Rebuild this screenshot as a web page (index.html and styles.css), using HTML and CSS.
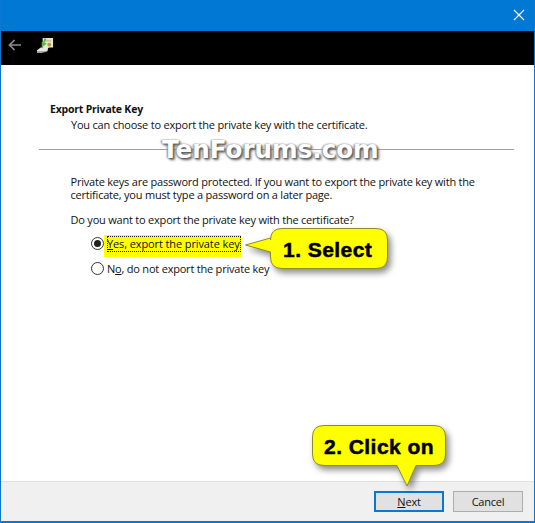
FILE: index.html
```html
<!DOCTYPE html>
<html lang="en">
<head>
  <meta charset="UTF-8">
  <meta name="viewport" content="width=device-width, initial-scale=1.0">
  <title>Export Private Key</title>
  <link rel="stylesheet" href="styles.css">
</head>
<body>
  <div class="window">
    <div class="title_bar">
      <svg class="close_icon" width="12" height="12" viewBox="0 0 12 12">
        <path d="M1 1 L11 11 M11 1 L1 11" stroke="#fff" stroke-width="1.1" fill="none"/>
      </svg>
    </div>

    <div class="nav_bar">
      <svg class="back_icon" width="14" height="12" viewBox="0 0 14 12">
        <path d="M13 6 H2 M6.5 1 L1.5 6 L6.5 11" stroke="#8c8c8c" stroke-width="1.7" fill="none"/>
      </svg>
      <svg class="wizard_icon" width="17" height="17" viewBox="0 0 18 18">
        <path d="M6 1 H17 V11 H13 L11 12 H6 Z" fill="#ece6c8"/>
        <path d="M8 3 H15 V5 H8 Z" fill="#c9c4a8"/>
        <circle cx="13" cy="8" r="2" fill="#b59a3c"/>
        <path d="M8 1 L10 2 L8 6 L10.5 7 L5 11 L5 5 L6.5 5.5 Z" fill="#58b947"/>
        <path d="M0 14 L4 11 H12 L11 15 L3 17 H0 Z" fill="#e4e4e4"/>
        <path d="M0 15 H10 V16 L3 17 H0 Z" fill="#9a9a9a"/>
      </svg>
    </div>

    <div class="content">
      <div class="head_text">
        <p class="head_title">Export Private Key</p>
        <p class="head_desc">You can choose to export the private key with the certificate.</p>
      </div>
      <div class="divider"></div>
      <div class="body_text">
        <p>Private keys are password protected. If you want to export the private key with the<br>certificate, you must type a password on a later page.</p>
        <p class="question">Do you want to export the private key with the certificate?</p>
        <div class="radio_row radio_first">
          <span class="radio checked"></span>
          <span class="label_mark"><span class="label_focus"><u>Y</u>es, export the private key</span></span>
        </div>
        <div class="radio_row">
          <span class="radio"></span>
          <span class="label_plain">N<u>o</u>, do not export the private key</span>
        </div>
      </div>
    </div>

    <div class="footer">
      <button class="btn btn_default"><u>N</u>ext</button>
      <button class="btn">Cancel</button>
    </div>
  </div>

  <!-- 水印 -->
  <div class="watermark">TenForums.com</div>

  <div class="callout callout_select">
    <svg width="150" height="50" viewBox="0 0 150 50">
      <path d="M25.5 10 V12 Q25.5 0.5 37 0.5 H131 Q142.5 0.5 142.5 12 V29 Q142.5 40.5 131 40.5 H37 Q25.5 40.5 25.5 29 V24 L0.5 17 Z" fill="#ffff00" stroke="#8c8c28"/>
    </svg>
    <span class="callout_text">1. Select</span>
  </div>

  <div class="callout callout_next">
    <svg width="140" height="66" viewBox="0 0 140 66">
      <path d="M12 0.5 H122 Q133.5 0.5 133.5 12 V29 Q133.5 40.5 122 40.5 H104 L95 61 L85 40.5 H12 Q0.5 40.5 0.5 29 V12 Q0.5 0.5 12 0.5 Z" fill="#ffff00" stroke="#8c8c28"/>
    </svg>
    <span class="callout_text">2. Click on</span>
  </div>
</body>
</html>
```

FILE: styles.css
```css
* {
  margin: 0;
  padding: 0;
  box-sizing: border-box;
}
body {
  width: 535px;
  height: 523px;
  position: relative;
  overflow: hidden;
  font-family: "Open Sans", "Noto Sans", sans-serif;
  font-size: 11px;
  letter-spacing: -.21px;
  color: #111;
}
.window {
  width: 535px;
  height: 523px;
  display: flex;
  flex-direction: column;
  border: 1px solid #0a78d2;
  border-top: 0;
  border-bottom-width: 2px;
  background-color: #fff;
}
.title_bar {
  height: 31px;
  flex: none;
  display: flex;
  justify-content: flex-end;
  align-items: center;
  padding: 0 9px 1px 0;
  background-color: #0078d4;
}
.nav_bar {
  height: 34px;
  flex: none;
  display: flex;
  align-items: center;
  gap: 15px;
  padding: 0 0 6px 7px;
  background-color: #000;
}
.content {
  flex: 1;
  padding-top: 36px;
}
.head_text {
  padding-left: 49px;
  line-height: 16px;
}
.head_title {
  font-weight: 700;
  font-size: 10.5px;
}
.head_desc {
  padding-left: 21px;
}
.divider {
  height: 1px;
  margin: 16px 20px 0 38px;
  background-color: #a0a0a0;
}
.body_text {
  padding: 25px 0 0 69.5px;
  line-height: 13px;
}
.question {
  margin-top: 12px;
}
.radio_row {
  display: flex;
  align-items: center;
  margin: 9px 0 0 20.5px;
  height: 16px;
}
.radio_first {
  margin-top: 9px;
}
.radio {
  width: 13px;
  height: 13px;
  flex: none;
  border: 1px solid #333;
  border-radius: 50%;
  background-color: #fff;
  display: flex;
  align-items: center;
  justify-content: center;
}
.checked::after {
  content: "";
  width: 7px;
  height: 7px;
  border-radius: 50%;
  background-color: #222;
}
.label_mark {
  display: block;
  height: 22px;
  margin-top: 5px;
  padding: 1px 0 0 3px;
  background-color: #ffff00;
}
.label_focus {
  display: block;
  padding: 0 1px 0 0;
  height: 16px;
  line-height: 15px;
  letter-spacing: -.11px;
  outline: 1px dotted #222;
  outline-offset: -1px;
}
.label_plain {
  padding-left: 3px;
}
.footer {
  height: 40px;
  flex: none;
  display: flex;
  justify-content: flex-end;
  align-items: center;
  gap: 9px;
  padding: 0 11px 0 0;
  background-color: #f0f0f0;
  border-top: 1px solid #e0e0e0;
}
.btn {
  width: 70px;
  height: 21px;
  font-family: inherit;
  font-size: 11px;
  letter-spacing: inherit;
  color: #111;
  background-color: #e1e1e1;
  border: 1px solid #adadad;
}
.btn_default {
  border: 2px solid #0a78d2;
}
.watermark {
  position: absolute;
  left: 162px;
  top: 134px;
  font-family: "DejaVu Sans", sans-serif;
  font-weight: 700;
  font-size: 24.6px;
  letter-spacing: 0;
  line-height: 32px;
  color: #fff;
  text-shadow: 1px 1px 2px #555, -1px 0 2px #888, 2px 2px 3px #777;
}
.callout {
  position: absolute;
}
.callout svg {
  display: block;
  filter: drop-shadow(3px 4px 3px rgba(0, 0, 0, .45));
}
.callout_text {
  position: absolute;
  font-family: "Liberation Sans", sans-serif;
  font-weight: 700;
  font-size: 21px;
  line-height: 24px;
  color: #000;
  white-space: nowrap;
  letter-spacing: .45px;
  -webkit-text-stroke: .5px #000;
}
.callout_select {
  left: 245px;
  top: 228px;
}
.callout_select .callout_text {
  left: 38px;
  top: 10px;
}
.callout_next {
  left: 312px;
  top: 425px;
}
.callout_next .callout_text {
  left: 12px;
  top: 10px;
}
```
